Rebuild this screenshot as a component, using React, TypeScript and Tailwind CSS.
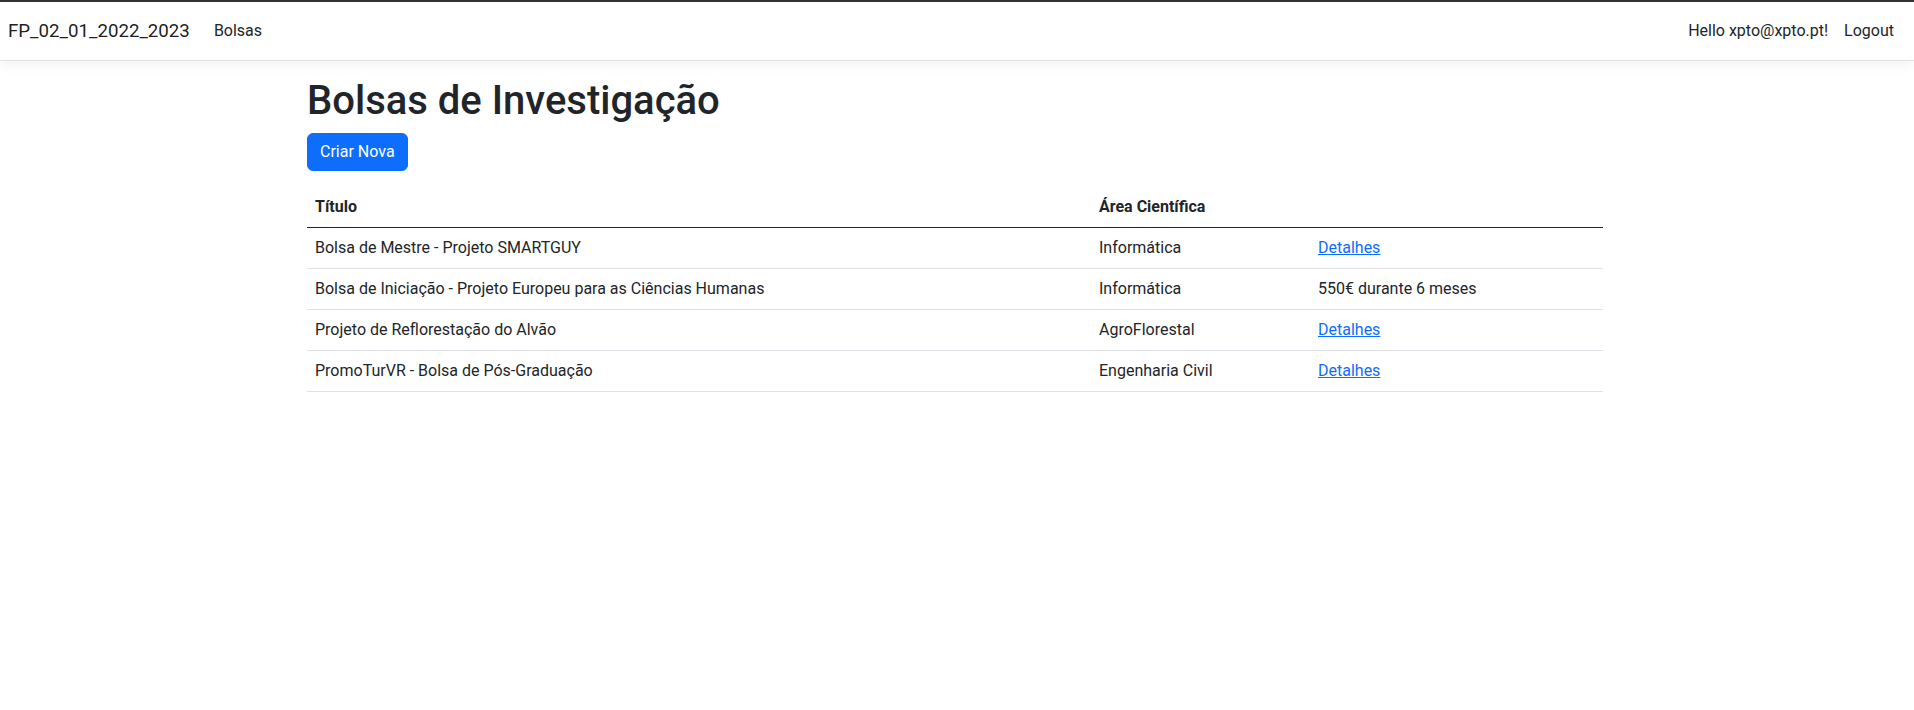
import React from "react";

const rows = [
  { t: "Bolsa de Mestre - Projeto SMARTGUY", a: "Informática", d: "link" },
  { t: "Bolsa de Iniciação - Projeto Europeu para as Ciências Humanas", a: "Informática", d: "550€ durante 6 meses" },
  { t: "Projeto de Reflorestação do Alvão", a: "AgroFlorestal", d: "link" },
  { t: "PromoTurVR - Bolsa de Pós-Graduação", a: "Engenharia Civil", d: "link" },
];

export default function App() {
  return (
    <div className="min-h-[710px] bg-white text-[#212529]" style={{ fontFamily: "Roboto, 'Noto Sans', sans-serif" }}>
      <div className="h-[2px] bg-[#333333]" />
      <nav className="flex h-[59px] items-center justify-between border-b border-[#dee2e6] bg-white pl-2 pr-3 shadow-[0_4px_12px_rgba(0,0,0,0.05)]">
        <div className="flex items-center">
          <span className="mr-4 text-[18.7px] leading-[30px] text-black/90">FP_02_01_2022_2023</span>
          <a className="px-2 py-2 text-[16px] leading-6 text-[#212529]">Bolsas</a>
        </div>
        <div className="flex items-center">
          <span className="px-2 py-2 text-[16px] leading-6 text-[#212529]">Hello xpto@xpto.pt!</span>
          <a className="px-2 py-2 text-[16px] leading-6 text-[#212529]">Logout</a>
        </div>
      </nav>
      <div className="pr-1">
        <main className="mx-auto mt-4 w-[1296px]">
          <h1 className="mb-2 text-[40px] font-medium leading-[48px]">Bolsas de Investigação</h1>
          <div className="mb-4">
            <button className="h-[38px] rounded-[6px] border border-[#0d6efd] bg-[#0d6efd] px-3 text-[16px] leading-6 text-white">
              Criar Nova
            </button>
          </div>
          <table className="w-full table-fixed border-collapse text-[16px] leading-6">
            <colgroup>
              <col className="w-[784px]" />
              <col className="w-[219px]" />
              <col />
            </colgroup>
            <thead>
              <tr className="border-b border-[#212529]">
                <th className="p-2 text-left font-bold">Título</th>
                <th className="p-2 text-left font-bold">Área Científica</th>
                <th className="p-2 text-left font-bold"></th>
              </tr>
            </thead>
            <tbody>
              {rows.map((r) => (
                <tr key={r.t} className="border-b border-[#dee2e6]">
                  <td className="p-2">{r.t}</td>
                  <td className="p-2">{r.a}</td>
                  <td className="p-2">
                    {r.d === "link" ? (
                      <a href="#" className="text-[#0d6efd] underline">Detalhes</a>
                    ) : (
                      r.d
                    )}
                  </td>
                </tr>
              ))}
            </tbody>
          </table>
        </main>
      </div>
    </div>
  );
}
